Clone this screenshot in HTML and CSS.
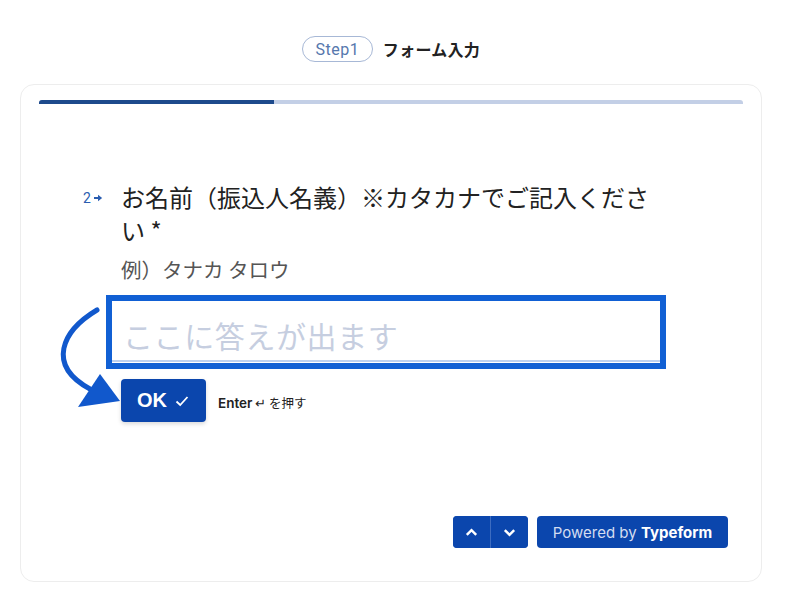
FILE: index.html
```html
<!DOCTYPE html>
<html lang="ja">
<head>
<meta charset="utf-8">
<link rel="stylesheet" href="styles.css">
</head>
<body>
<div class="page">
  <header class="step-header">
    <span class="step-pill">Step1</span>
    <span class="step-title">フォーム入力</span>
  </header>
  <section class="card">
    <div class="progress"><div class="progress-fill"></div></div>
    <div class="question">
      <div class="q-row">
        <div class="q-num">2<svg class="q-arrow" viewBox="0 0 10 10" width="10" height="10"><path d="M1 5h5" fill="none" stroke="#2a5db0" stroke-width="2"/><polygon points="5,1.8 9.2,5 5,8.2" fill="#2a5db0"/></svg></div>
        <div class="q-body">
          <h1 class="q-text">お名前（振込人名義）※カタカナでご記入ください *</h1>
          <p class="q-hint">例）タナカ タロウ</p>
          <div class="answer">
            <span class="placeholder">ここに答えが出ます</span>
          </div>
          <div class="ok-row">
            <button class="ok-btn">OK <svg viewBox="0 0 16 16" width="16" height="16"><path d="M2.5 8.5 6.2 12 13.5 4" fill="none" stroke="#fff" stroke-width="1.8"/></svg></button>
            <span class="enter-hint"><b>Enter</b> <span class="ret">↵</span> を押す</span>
          </div>
        </div>
      </div>
      <svg class="callout" viewBox="0 0 80 110" width="80" height="110">
        <path d="M47 7 C 12 28, -4 62, 40 86" fill="none" stroke="#1158cc" stroke-width="5" stroke-linecap="round"/>
        <polygon points="50,71 70,98 28,104" fill="#1158cc"/>
      </svg>
    </div>
    <footer class="card-footer">
      <div class="nav-group">
        <button class="nav-btn"><svg viewBox="0 0 16 16" width="15" height="15"><path d="M3 10.5 8 5.5 13 10.5" fill="none" stroke="#fff" stroke-width="2.6"/></svg></button>
        <button class="nav-btn"><svg viewBox="0 0 16 16" width="15" height="15"><path d="M3 5.5 8 10.5 13 5.5" fill="none" stroke="#fff" stroke-width="2.6"/></svg></button>
      </div>
      <button class="powered">Powered by <b>Typeform</b></button>
    </footer>
  </section>
</div>
</body>
</html>
```
FILE: styles.css
```css
* { box-sizing: border-box; }
html, body { margin: 0; padding: 0; background: #fff; }
body {
  font-family: "Noto Sans CJK JP", "Noto Sans", sans-serif;
  color: #222;
}
.page {
  width: 742px;
  margin-left: 20px;
  padding-top: 36px;
}
.step-header {
  display: flex;
  justify-content: center;
  align-items: center;
  gap: 10px;
  height: 26px;
}
.step-pill {
  display: inline-flex;
  align-items: center;
  justify-content: center;
  width: 71px;
  height: 26px;
  border: 1.5px solid #a7b8d6;
  border-radius: 13px;
  font-family: Roboto, "Noto Sans", sans-serif;
  font-size: 16px;
  color: #5678ad;
  letter-spacing: 0.5px;
}
.step-title {
  font-size: 16px;
  font-weight: 700;
  color: #222;
  letter-spacing: 0.3px;
}
.card {
  margin-top: 22px;
  height: 498px;
  border: 1px solid #ededed;
  border-radius: 14px;
  padding: 15px 18px 33px;
  display: flex;
  flex-direction: column;
}
.progress {
  height: 4px;
  background: #c3cfe6;
  border-radius: 3px 3px 0 0;
  overflow: hidden;
}
.progress-fill {
  width: 235px;
  height: 100%;
  background: #1d4a8c;
}
.question {
  position: relative;
  margin-top: 76px;
}
.q-row {
  display: flex;
  padding-left: 44px;
}
.q-num {
  width: 38px;
  flex: none;
  height: 33px;
  display: flex;
  align-items: center;
  font-family: Roboto, sans-serif;
  font-size: 14px;
  color: #2a5db0;
  padding-top: 3px;
}
.q-arrow { margin-left: 2px; }
.q-body { width: 545px; }
.q-text {
  margin: 0;
  font-size: 24px;
  font-weight: 400;
  line-height: 33px;
  color: #222;
  width: 540px;
}
.q-hint {
  margin: 10px 0 0;
  font-size: 20.5px;
  line-height: 26px;
  color: #555;
}
.answer {
  margin: 13px 0 0 -15px;
  width: 560px;
  height: 74px;
  border: 6px solid #1160d4;
  padding: 6px 0 0 11px;
  display: flex;
  align-items: center;
  position: relative;
}
.answer::after {
  content: "";
  position: absolute;
  left: 0;
  right: 0;
  bottom: 1px;
  height: 2px;
  background: #bcd0ef;
}
.placeholder {
  font-size: 30px;
  color: #c6cee0;
  letter-spacing: 0.6px;
}
.ok-row {
  display: flex;
  align-items: center;
  margin-top: 10px;
}
.ok-btn {
  width: 85px;
  height: 43px;
  border: 0;
  border-radius: 4px;
  background: #0b46ad;
  color: #fff;
  font-family: "Liberation Sans", Arial, sans-serif;
  font-weight: 700;
  font-size: 20px;
  display: flex;
  align-items: center;
  justify-content: center;
  gap: 7px;
  box-shadow: 0 2px 4px rgba(0,0,0,0.15);
  padding: 0;
}
.enter-hint {
  margin-left: 12px;
  margin-top: 4px;
  font-size: 12.5px;
  color: #222;
}
.enter-hint b {
  font-family: Inter, "Noto Sans", sans-serif;
  font-weight: 600;
  font-size: 13.5px;
}
.ret {
  font-family: "DejaVu Sans", sans-serif;
  font-size: 13px;
}
.callout {
  position: absolute;
  left: 11px;
  top: 123px;
}
.card-footer {
  margin-top: auto;
  display: flex;
  justify-content: flex-end;
  gap: 9px;
  padding-right: 15px;
}
.nav-group {
  display: flex;
  border-radius: 4px;
  overflow: hidden;
  gap: 1px;
  background: #3d6cc0;
}
.nav-btn {
  width: 37px;
  height: 32px;
  border: 0;
  padding: 0;
  background: #0b46ad;
  display: flex;
  align-items: center;
  justify-content: center;
}
.powered {
  width: 191px;
  height: 32px;
  border: 0;
  border-radius: 4px;
  background: #0b46ad;
  color: #d3ddf1;
  font-family: Inter, "Noto Sans", sans-serif;
  font-size: 15px;
  padding: 0;
}
.powered b {
  color: #fff;
  font-weight: 700;
}
```
